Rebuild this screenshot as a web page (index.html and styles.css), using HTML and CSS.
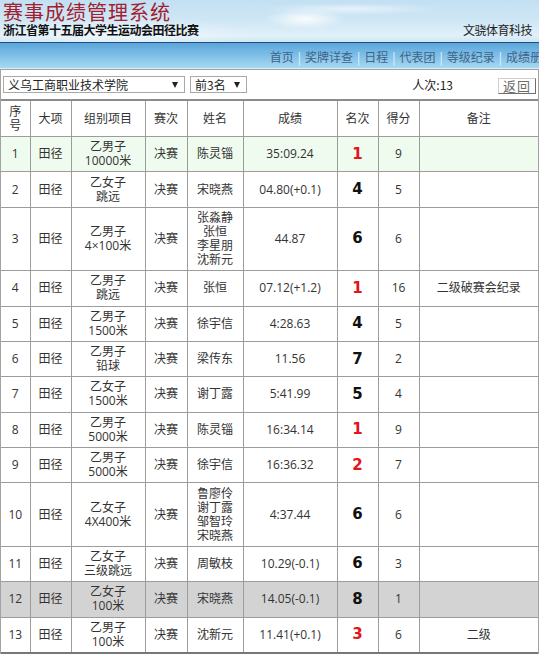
FILE: index.html
```html
<!DOCTYPE html>
<html lang="zh-CN">
<head>
<meta charset="utf-8">
<title>赛事成绩管理系统</title>
<link rel="stylesheet" href="styles.css">
</head>
<body>
<header class="header">
  <div class="title">赛事成绩管理系统</div>
  <div class="subrow">
    <span class="sub">浙江省第十五届大学生运动会田径比赛</span>
    <span class="company">文骁体育科技</span>
  </div>
</header>
<nav class="nav">
  <div class="nav-list">
    <span>首页</span><span class="sep">|</span><span>奖牌详查</span><span class="sep">|</span><span>日程</span><span class="sep">|</span><span>代表团</span><span class="sep">|</span><span>等级纪录</span><span class="sep">|</span><span>成绩册</span>
  </div>
</nav>
<main class="main">
  <div class="filters">
    <div class="sel sel1"><span>义乌工商职业技术学院</span><i class="arrow"></i></div>
    <div class="sel sel2"><span>前3名</span><i class="arrow"></i></div>
    <div class="count">人次:13</div>
    <div class="btn">返回</div>
  </div>
  <table class="results">
    <colgroup>
      <col class="c1"><col class="c2"><col class="c3"><col class="c4"><col class="c5"><col class="c6"><col class="c7"><col class="c8"><col class="c9">
    </colgroup>
    <thead>
      <tr><th>序<br>号</th><th>大项</th><th>组别项目</th><th>赛次</th><th>姓名</th><th>成绩</th><th>名次</th><th>得分</th><th>备注</th></tr>
    </thead>
    <tbody>
      <tr class="win"><td>1</td><td>田径</td><td>乙男子<br>10000米</td><td>决赛</td><td>陈灵锱</td><td>35:09.24</td><td><span class="rk red">1</span></td><td>9</td><td></td></tr>
      <tr><td>2</td><td>田径</td><td>乙女子<br>跳远</td><td>决赛</td><td>宋晓燕</td><td>04.80(+0.1)</td><td><span class="rk">4</span></td><td>5</td><td></td></tr>
      <tr><td>3</td><td>田径</td><td>乙男子<br>4×100米</td><td>决赛</td><td>张淼静<br>张恒<br>李星朋<br>沈新元</td><td>44.87</td><td><span class="rk">6</span></td><td>6</td><td></td></tr>
      <tr><td>4</td><td>田径</td><td>乙男子<br>跳远</td><td>决赛</td><td>张恒</td><td>07.12(+1.2)</td><td><span class="rk red">1</span></td><td>16</td><td>二级破赛会纪录</td></tr>
      <tr><td>5</td><td>田径</td><td>乙男子<br>1500米</td><td>决赛</td><td>徐宇信</td><td>4:28.63</td><td><span class="rk">4</span></td><td>5</td><td></td></tr>
      <tr><td>6</td><td>田径</td><td>乙男子<br>铅球</td><td>决赛</td><td>梁传东</td><td>11.56</td><td><span class="rk">7</span></td><td>2</td><td></td></tr>
      <tr><td>7</td><td>田径</td><td>乙女子<br>1500米</td><td>决赛</td><td>谢丁露</td><td>5:41.99</td><td><span class="rk">5</span></td><td>4</td><td></td></tr>
      <tr><td>8</td><td>田径</td><td>乙男子<br>5000米</td><td>决赛</td><td>陈灵锱</td><td>16:34.14</td><td><span class="rk red">1</span></td><td>9</td><td></td></tr>
      <tr><td>9</td><td>田径</td><td>乙男子<br>5000米</td><td>决赛</td><td>徐宇信</td><td>16:36.32</td><td><span class="rk red">2</span></td><td>7</td><td></td></tr>
      <tr><td>10</td><td>田径</td><td>乙女子<br>4X400米</td><td>决赛</td><td>鲁廖伶<br>谢丁露<br>邹智玲<br>宋晓燕</td><td>4:37.44</td><td><span class="rk">6</span></td><td>6</td><td></td></tr>
      <tr><td>11</td><td>田径</td><td>乙女子<br>三级跳远</td><td>决赛</td><td>周敏枝</td><td>10.29(-0.1)</td><td><span class="rk">6</span></td><td>3</td><td></td></tr>
      <tr class="hl"><td>12</td><td>田径</td><td>乙女子<br>100米</td><td>决赛</td><td>宋晓燕</td><td>14.05(-0.1)</td><td><span class="rk">8</span></td><td>1</td><td></td></tr>
      <tr><td>13</td><td>田径</td><td>乙男子<br>100米</td><td>决赛</td><td>沈新元</td><td>11.41(+0.1)</td><td><span class="rk red">3</span></td><td>6</td><td>二级</td></tr>
    </tbody>
  </table>
</main>
</body>
</html>
```

FILE: styles.css
```css
* { box-sizing: border-box; }
html, body { margin: 0; padding: 0; }
body {
  width: 539px;
  overflow: hidden;
  background: #fff;
  color: #333;
  font-family: "Open Sans", "Noto Sans CJK SC", sans-serif;
  font-size: 12px;
}

.header {
  height: 43px;
  padding: 2px 7px 0 3px;
  border-bottom: 1px solid #1f4e7f;
  background:
    radial-gradient(ellipse 40px 10px at 305px 19px, rgba(255,255,255,0.9), rgba(255,255,255,0)),
    radial-gradient(ellipse 90px 6px at 350px 9px, rgba(255,255,255,0.55), rgba(255,255,255,0)),
    radial-gradient(ellipse 140px 20px at 120px 36px, rgba(255,255,255,0.5), rgba(255,255,255,0)),
    linear-gradient(180deg, #c2e0f3 0%, #cfe7f5 50%, #e1f0f9 85%, #cde5f4 100%);
}
.title {
  font-family: "Noto Sans CJK SC", sans-serif;
  font-size: 20px;
  line-height: 20px;
  letter-spacing: 1px;
  color: #a2202f;
}
.subrow {
  display: flex;
  justify-content: space-between;
  align-items: baseline;
  margin-top: 1px;
  line-height: 14px;
  font-family: "Noto Sans CJK SC", sans-serif;
}
.sub { font-weight: bold; letter-spacing: -0.5px; color: #111; }
.company { letter-spacing: -0.5px; color: #222; }

.nav {
  height: 26px;
  padding-top: 1px;
  border-bottom: 1px solid #d6ecf7;
  background: linear-gradient(180deg, #5aa5db 0%, #7fbfe7 50%, #a7d9f2 100%);
  display: flex;
  justify-content: flex-end;
  align-items: center;
  overflow: hidden;
  white-space: nowrap;
  font-family: "Noto Sans CJK SC", sans-serif;
}
.nav-list { display: flex; margin-right: -3px; color: #3f6387; }
.sep { color: #e9f5fc; margin: 0 4px; }

.main {
  border: 1px solid #a3a3a3;
  border-bottom: none;
}
.filters {
  display: flex;
  align-items: flex-start;
  padding: 6px 2px 5px 2px;
  font-family: "Noto Sans CJK SC", sans-serif;
  color: #222;
}
.sel {
  height: 17px;
  border: 1px solid #a9a9a9;
  background: #fff;
  display: flex;
  align-items: center;
  justify-content: space-between;
  padding: 0 6px 0 4px;
  line-height: 15px;
}
.sel1 { width: 182px; }
.sel2 { width: 57px; margin-left: 5px; }
.arrow {
  width: 0; height: 0;
  border-left: 3.5px solid transparent;
  border-right: 3.5px solid transparent;
  border-top: 6px solid #222;
}
.count { margin-left: auto; margin-right: 45px; line-height: 17px; }
.btn {
  width: 38px;
  height: 16px;
  margin-top: 2px;
  border: 1px solid;
  border-color: #cfcfcf #6f6f6f #6f6f6f #cfcfcf;
  color: #6a6a6a;
  font-size: 13px;
  line-height: 14px;
  letter-spacing: 1px;
  text-align: center;
}

.results {
  width: 100%;
  table-layout: fixed;
  border-collapse: collapse;
  border-top: 2px solid #8c8c8c;
  border-bottom: 2px solid #777;
  font-family: "Open Sans", "Noto Sans CJK SC", sans-serif;
}
.c1 { width: 29px; } .c2 { width: 41px; } .c3 { width: 74px; }
.c4 { width: 42px; } .c5 { width: 56px; } .c6 { width: 94px; }
.c7 { width: 41px; } .c8 { width: 41px; } .c9 { width: 119px; }
.results th, .results td {
  border: 1px solid #9c9c9c;
  padding: 3.2px 1px;
  line-height: 14px;
  text-align: center;
  vertical-align: middle;
  font-weight: normal;
  color: #333;
}
.results thead th { padding: 3.5px 1px; }
.results tr > :first-child { border-left: none; }
.results tr > :last-child { border-right: none; }
.win { background: #effbef; }
.hl { background: #d3d3d3; }
.rk {
  font-family: "DejaVu Sans", sans-serif;
  font-weight: bold;
  font-size: 15px;
  line-height: 14px;
  color: #111;
}
.rk.red { color: #e3151b; }
```
